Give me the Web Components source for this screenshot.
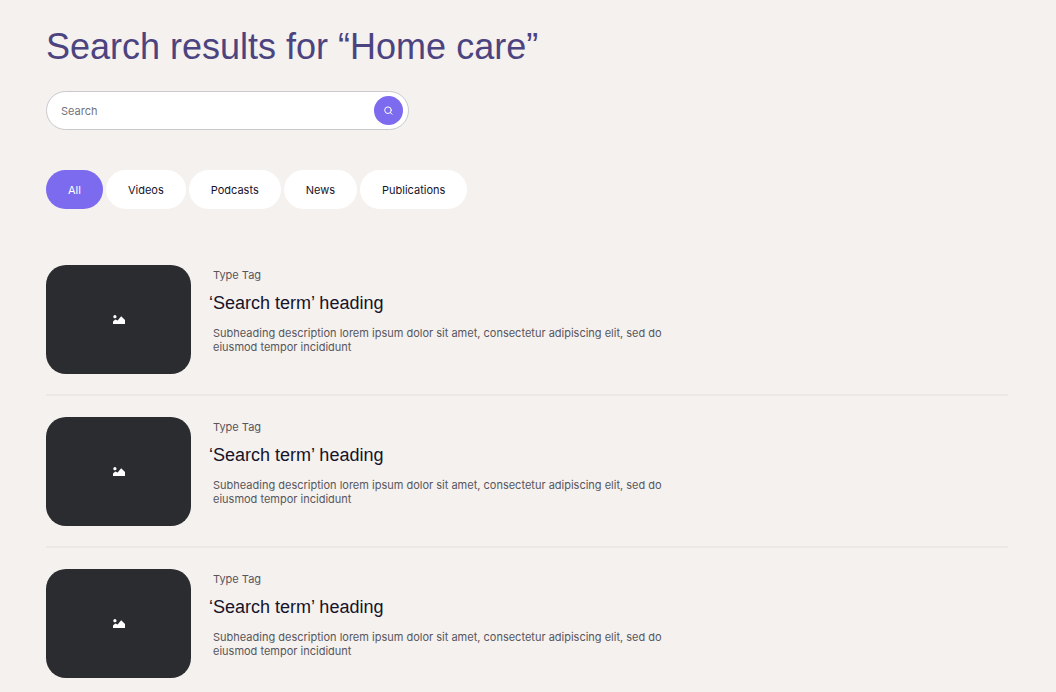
<!DOCTYPE html>
<html lang="en">
<head>
<meta charset="utf-8">
<meta name="viewport" content="width=device-width, initial-scale=1">
<title>Search results</title>
<style>
  body {
    margin: 0;
    background: #f5f1ee;
    color: #16132b;
    font-family: Inter, "Liberation Sans", sans-serif;
    font-size: 11px;
    line-height: 14px;
  }
</style>
</head>
<body>
<search-page></search-page>

<template id="search-page">
  <style>
    :host { display: block; padding: 25px 48px 14px 46px; }
    h1 {
      margin: 0 0 22px;
      color: #4c4480;
      font: 400 36px/44px "Liberation Sans", Arial, sans-serif;
    }
    nav { display: flex; flex-wrap: wrap; gap: 3px; margin: 40px 0 56px; }
  </style>
  <main>
    <h1>Search results for “Home care”</h1>
    <search-box></search-box>
    <nav aria-label="Result type">
      <filter-pill selected>All</filter-pill>
      <filter-pill>Videos</filter-pill>
      <filter-pill>Podcasts</filter-pill>
      <filter-pill>News</filter-pill>
      <filter-pill>Publications</filter-pill>
    </nav>
    <section aria-label="Results">
      <result-item>
        <span slot="tag">Type Tag</span>
        <span slot="heading">‘Search term’ heading</span>
        Subheading description lorem ipsum dolor sit amet, consectetur adipiscing elit, sed do eiusmod tempor incididunt
      </result-item>
      <result-item>
        <span slot="tag">Type Tag</span>
        <span slot="heading">‘Search term’ heading</span>
        Subheading description lorem ipsum dolor sit amet, consectetur adipiscing elit, sed do eiusmod tempor incididunt
      </result-item>
      <result-item>
        <span slot="tag">Type Tag</span>
        <span slot="heading">‘Search term’ heading</span>
        Subheading description lorem ipsum dolor sit amet, consectetur adipiscing elit, sed do eiusmod tempor incididunt
      </result-item>
    </section>
  </main>
</template>

<template id="search-box">
  <style>
    :host { display: block; max-width: 363px; }
    form {
      display: flex;
      align-items: center;
      box-sizing: border-box;
      height: 39px;
      padding: 0 5px 0 14px;
      border: 1px solid #c9c9cd;
      border-radius: 20px;
      background: #fff;
    }
    input {
      flex: 1;
      min-width: 0;
      padding: 0;
      border: 0;
      outline: 0;
      background: none;
      color: #16132b;
      font: inherit;
    }
    input::placeholder { color: #73727d; opacity: 1; }
    button {
      display: grid;
      place-items: center;
      width: 29px;
      height: 29px;
      padding: 0;
      border: 0;
      border-radius: 50%;
      background: #7c6aef;
      cursor: pointer;
    }
  </style>
  <form role="search">
    <input type="text" placeholder="Search" aria-label="Search">
    <button type="button" aria-label="Submit search">
      <svg width="9" height="9" viewBox="0 0 9 9" fill="none" stroke="#fff" stroke-linecap="round">
        <circle cx="4" cy="4.2" r="3.3"/>
        <path d="M6.3 6.5 8.2 8.3"/>
      </svg>
    </button>
  </form>
</template>

<template id="filter-pill">
  <style>
    :host { display: block; }
    button {
      display: block;
      height: 39px;
      padding: 0 22px;
      border: 0;
      border-radius: 20px;
      background: #fff;
      color: #16132b;
      font: inherit;
      cursor: pointer;
    }
    :host([selected]) button { background: #7c6aef; color: #fff; }
  </style>
  <button type="button"><slot></slot></button>
</template>

<template id="result-item">
  <style>
    :host {
      display: block;
      padding-bottom: 20px;
      margin-bottom: 21px;
      border-bottom: 2px solid #ebe9e8;
    }
    :host(:last-of-type) { padding-bottom: 0; margin-bottom: 0; border-bottom: 0; }
    article { display: flex; gap: 22px; }
    .thumb {
      flex: none;
      display: grid;
      place-items: center;
      width: 145px;
      height: 109px;
      border-radius: 20px;
      background: #2b2c30;
    }
    .text { flex: 1; max-width: 456px; padding-top: 3px; color: #57565d; }
    p { margin: 0; }
    h2 {
      margin: 10px 0 12px;
      color: #16132b;
      font: 400 18px/22px "Liberation Sans", Arial, sans-serif;
      text-indent: -4px;
    }
  </style>
  <article>
    <div class="thumb">
      <svg width="12" height="9" viewBox="0 0 12 9" fill="#fff" aria-hidden="true">
        <circle cx="1.9" cy="1.7" r="1.6"/>
        <path d="M0 9V6.4L2.2 4.6 4.6 5.4 8.2 1.2 12 5V9Z"/>
      </svg>
    </div>
    <div class="text">
      <p><slot name="tag"></slot></p>
      <h2><slot name="heading"></slot></h2>
      <p><slot></slot></p>
    </div>
  </article>
</template>

<script>
  class TemplateElement extends HTMLElement {
    constructor() {
      super();
      const template = document.getElementById(this.localName);
      this.attachShadow({ mode: "open" }).append(template.content.cloneNode(true));
    }
  }
  customElements.define("search-box", class SearchBox extends TemplateElement {});
  customElements.define("filter-pill", class FilterPill extends TemplateElement {});
  customElements.define("result-item", class ResultItem extends TemplateElement {});
  customElements.define("search-page", class SearchPage extends TemplateElement {});
</script>
</body>
</html>
